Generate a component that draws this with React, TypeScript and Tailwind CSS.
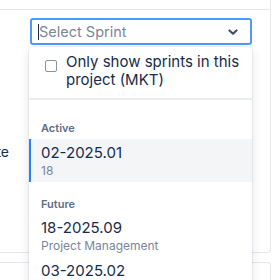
import React from "react";

export default function App() {
  return (
    <div
      className="relative w-[275px] h-[280px] overflow-hidden bg-white text-[#172b4d]"
      style={{ fontFamily: "Inter, 'Noto Sans', 'Liberation Sans', sans-serif" }}
    >
      {/* background page */}
      <div className="w-[271px] h-[10px] border-b border-r border-[#e4e6ea]" />
      <div className="w-[271px] h-[243px] border-r border-b border-[#e4e6ea] rounded-br-[4px] flex flex-col">
        <div className="ml-[30px] mt-[8px] w-[222px] h-[27px] border-2 border-[#4c9aff] rounded-[3px] flex items-center pl-[6px] pr-[12px]">
          <span className="w-px h-[16px] bg-[#172b4d]" />
          <span className="flex-1 text-[14.5px] text-[#7a869a] leading-5">Select Sprint</span>
          <svg width="10" height="8" viewBox="0 0 10 8" className="mt-[1px]">
            <path d="M1.5 2.5 L5 5.8 L8.5 2.5" fill="none" stroke="#42526e" strokeWidth="2.2" strokeLinecap="round" strokeLinejoin="round" />
          </svg>
        </div>
        <div className="mt-[97px] w-[9px] overflow-hidden flex justify-end whitespace-nowrap text-[14px] leading-5 text-[#172b4d]">
          Start date
        </div>
      </div>
      <div className="mt-[9px] w-[271px] h-[30px] border-t border-r border-[#e4e6ea] rounded-tr-[4px]" />

      {/* dropdown menu overlay */}
      <div className="absolute left-[29px] top-[47px] w-[223px] h-[260px] bg-white rounded-[4px] shadow-[0_0_0_1px_rgba(9,30,66,0.06),0_4px_11px_rgba(9,30,66,0.12)]">
        <div className="flex items-start pl-[16px] pt-[6px] pb-[9px]">
          <span className="mt-[7px] w-[12px] h-[12px] border-[1.5px] border-[#8993a4] rounded-[2px] bg-white shrink-0" />
          <span className="ml-[9px] text-[15px] leading-[18px] text-[#172b4d]">
            Only show sprints in this
            <br />
            project (MKT)
          </span>
        </div>
        <div className="h-[2px] bg-[#ebecf0]" />
        <div className="pt-[6px]">
          <div className="mt-[14px] mb-[3px] pl-[12px] text-[11px] leading-4 font-semibold text-[#5e6c84]">Active</div>
          <div className="bg-[#f4f5f7] border-l-2 border-[#2684ff] pl-[10px] py-[4px]">
            <div className="text-[15px] leading-5 text-[#172b4d]">02-2025.01</div>
            <div className="text-[12px] leading-[15px] text-[#7a869a]">18</div>
          </div>
          <div className="mt-[14px] mb-[2px] pl-[12px] text-[11px] leading-4 font-semibold text-[#5e6c84]">Future</div>
          <div className="pl-[12px] py-[4px]">
            <div className="text-[15px] leading-5 text-[#172b4d]">18-2025.09</div>
            <div className="text-[12px] leading-[15px] text-[#7a869a]">Project Management</div>
          </div>
          <div className="pl-[12px] py-[4px]">
            <div className="text-[15px] leading-5 text-[#172b4d]">03-2025.02</div>
            <div className="text-[12px] leading-[15px] text-[#7a869a]">Project Management</div>
          </div>
        </div>
      </div>
    </div>
  );
}
